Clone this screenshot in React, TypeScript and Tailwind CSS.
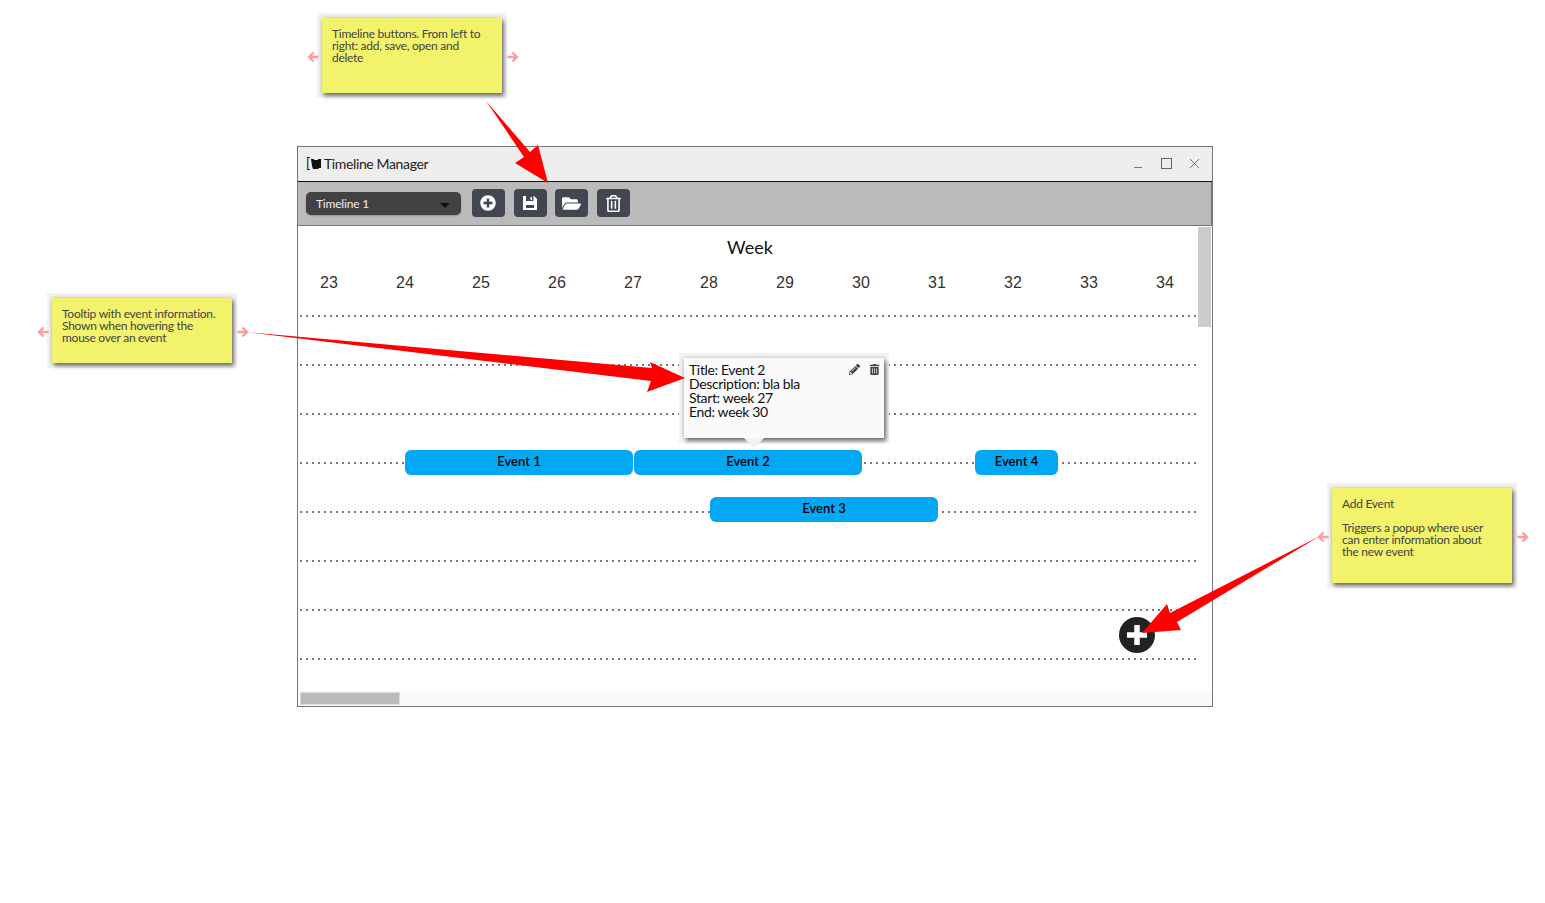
import { FaPlusCircle, FaFolderOpen, FaRegTrashAlt, FaPencilAlt, FaTrashAlt } from "react-icons/fa";

const weeks = [23, 24, 25, 26, 27, 28, 29, 30, 31, 32, 33, 34];
const sans = "font-['Lato','Noto_Sans',sans-serif]";

function PinkArrows({ top }: { top: string }) {
  return (
    <>
      <svg className={`absolute left-[-15px] w-[12px] h-[12px] ${top}`} viewBox="0 0 12 12" fill="none" stroke="#ff9c9c" strokeWidth="2.4">
        <path d="M6.5 1.5 2 6l4.5 4.5M2 6h9.5" />
      </svg>
      <svg className={`absolute right-[-17px] w-[12px] h-[12px] ${top}`} viewBox="0 0 12 12" fill="none" stroke="#ff9c9c" strokeWidth="2.4">
        <path d="M5.5 1.5 10 6l-4.5 4.5M10 6H.5" />
      </svg>
    </>
  );
}

function Note({ className, children }: { className: string; children: React.ReactNode }) {
  return (
    <div className={`absolute w-[180px] bg-[#f2f26b] text-[#444] text-[12px] leading-[12px] tracking-[-0.27px] pl-[10px] pr-[10px] pt-[10px] shadow-[2px_3px_4px_rgba(0,0,0,0.5),0_0_4px_rgba(0,0,0,0.2),0_0_0_5px_#f2f2f2] ${className}`}>
      {children}
    </div>
  );
}

function ToolButton({ children }: { children: React.ReactNode }) {
  return (
    <button className="w-[33px] h-[28px] rounded-[4px] bg-[#424650] text-white flex items-center justify-center text-[17px]">
      {children}
    </button>
  );
}

function EventBar({ label, className }: { label: string; className: string }) {
  return (
    <div className={`absolute h-[25px] pb-[1px] rounded-[6px] bg-[#02a8f3] text-black text-[13px] font-semibold flex items-center justify-center ${className}`}>
      {label}
    </div>
  );
}

function Row({ children }: { children?: React.ReactNode }) {
  return (
    <div className="relative shrink-0 h-[49px] w-[898px] bg-[linear-gradient(to_right,#777_2px,transparent_2px)] bg-[length:6px_2px] bg-repeat-x bg-top">
      <div className="absolute left-[914px] top-0 w-[1px] h-[2px] bg-[#333]" />
      {children}
    </div>
  );
}

export default function App() {
  return (
    <div className={`relative w-[1545px] h-[903px] overflow-hidden bg-white pt-[146px] pl-[297px] ${sans}`}>
      <div className="relative w-[916px] h-[561px] border border-[#777] flex flex-col bg-white">
        <div className="shrink-0 h-[35px] bg-[#eeeeee] flex items-center pl-[8px] pr-[13px] pb-[2px] border-b border-[#111]">
          <span className="text-[13px] text-black leading-none">[</span>
          <svg className="w-[10px] h-[11px] mr-[3px] ml-[1px]" viewBox="0 0 10 11" fill="#111">
            <path d="M0 1h2.5l1 1h3l1-1H10v9H8l-1 1H2L1 8z" />
          </svg>
          <span className="text-[14px] text-[#222] tracking-[-0.37px]">Timeline Manager</span>
          <div className="ml-auto flex items-center gap-[18px] text-[#666]">
            <svg className="w-[10px] h-[10px]" viewBox="0 0 10 10" stroke="#777" strokeWidth="1"><path d="M1 9.5h8" /></svg>
            <svg className="w-[11px] h-[11px]" viewBox="0 0 11 11" fill="none" stroke="#666" strokeWidth="1"><rect x=".5" y=".5" width="10" height="10" /></svg>
            <svg className="w-[9px] h-[9px]" viewBox="0 0 9 9" fill="none" stroke="#777" strokeWidth="1"><path d="M0 0l9 9M9 0 0 9" /></svg>
          </div>
        </div>
        <div className="shrink-0 h-[44px] bg-[#bbbbbb] border-b border-[#777] border-r border-r-[#777] flex items-center pl-[8px] pb-[1px] gap-[8.67px]">
          <div className="w-[155px] h-[23px] mt-[1px] mr-[2.33px] rounded-[5px] bg-[#424242] shadow-[0_1px_2px_rgba(0,0,0,0.2)] text-[#eee] text-[12px] tracking-[-0.2px] flex items-center pl-[10px] pr-[11px] justify-between">
            <span>Timeline 1</span>
            <span className="w-0 h-0 border-x-[5px] border-x-transparent border-t-[5px] border-t-[#111] mt-[3px]" />
          </div>
          <ToolButton><FaPlusCircle className="text-[16px]" /></ToolButton>
          <ToolButton>
            <svg className="w-[16px] h-[16px]" viewBox="0 0 16 16">
              <path fill="#fff" d="M1 1h11l3 3v11H1z" />
              <rect fill="#424650" x="4" y="1" width="7.5" height="5" />
              <rect fill="#fff" x="8.5" y="2" width="1.6" height="3" />
              <rect fill="#424650" x="4" y="10" width="8" height="3" />
            </svg>
          </ToolButton>
          <ToolButton><FaFolderOpen className="text-[19px]" /></ToolButton>
          <ToolButton><FaRegTrashAlt /></ToolButton>
        </div>
        <div className="relative flex-1 min-h-0 overflow-hidden flex flex-col">
          <div className="shrink-0 h-[89px] w-[904px] flex flex-col">
            <div className="h-[41px] pt-[9px] text-center text-[18px] leading-[24px] text-[#111]">Week</div>
            <div className="grid grid-cols-12 w-[912px] ml-[-7px] text-[16px] text-[#333] font-['Liberation_Sans',sans-serif] leading-[20px] pt-[6px]">
              {weeks.map((w) => (
                <div key={w} className="text-center">{w}</div>
              ))}
            </div>
          </div>
          <Row />
          <Row />
          <Row />
          <Row>
            <EventBar label="Event 1" className="left-[107px] top-[-12px] w-[228px]" />
            <EventBar label="Event 2" className="left-[336px] top-[-12px] w-[228px]" />
            <EventBar label="Event 4" className="left-[677px] top-[-12px] w-[83px]" />
          </Row>
          <Row>
            <EventBar label="Event 3" className="left-[412px] top-[-14px] w-[228px]" />
          </Row>
          <Row />
          <Row />
          <Row />
          <div className="absolute left-[386px] top-[132px] w-[200px] h-[80px] bg-[#fafafa] shadow-[2px_3px_4px_rgba(0,0,0,0.5),0_0_4px_rgba(0,0,0,0.2),0_0_0_5px_#f2f2f2] pl-[5px] pt-[5px] text-[14px] leading-[14px] tracking-[-0.35px] text-[#111]">
            <div>Title: Event 2</div>
            <div>Description: bla bla</div>
            <div>Start: week 27</div>
            <div>End: week 30</div>
            <FaPencilAlt className="absolute left-[165px] top-[6px] text-[11px] text-[#444]" />
            <FaTrashAlt className="absolute left-[185px] top-[6px] text-[11px] text-[#444]" />
            <div className="absolute left-[60px] top-[80px] w-0 h-0 border-x-[10px] border-x-transparent border-t-[10px] border-t-[#f2f2f2]" />
          </div>
          <div className="absolute left-[821px] top-[391px] w-[36px] h-[36px] rounded-full bg-[#222] flex items-center justify-center">
            <svg className="w-[20px] h-[20px]" viewBox="0 0 20 20" stroke="#fff" strokeWidth="5.5"><path d="M10 0v20M0 10h20" /></svg>
          </div>
          <div className="absolute right-[1px] top-[1px] w-[13px] h-[100px] bg-[#cccccc]" />
          <div className="absolute left-0 right-0 bottom-0 h-[15px] bg-[#fafafa] pl-[2px] pt-[1px]">
            <div className="w-[100px] h-[13px] bg-[#bbbbbb] border border-[#ddd]" />
          </div>
        </div>
      </div>

      <Note className="left-[322px] top-[18px] h-[75px]">
        Timeline buttons. From left to right: add, save, open and delete
        <PinkArrows top="top-[33px]" />
      </Note>
      <Note className="left-[52px] top-[298px] h-[65px]">
        Tooltip with event information. Shown when hovering the mouse over an event
        <PinkArrows top="top-[28px]" />
      </Note>
      <Note className="left-[1332px] top-[488px] h-[95px]">
        <div className="mb-[12px]">Add Event</div>
        <div className="pr-[10px]">Triggers a popup where user can enter information about the new event</div>
        <PinkArrows top="top-[43px]" />
      </Note>

      <svg className="absolute inset-0 w-[1545px] h-[903px] pointer-events-none" viewBox="0 0 1545 903" fill="#ff0000">
        <polygon points="486,101 530,152 538,145 548,183 515,163 524,157" />
        <polygon points="245,332 652,368 650,362 685,378 647,392 651,381" />
        <polygon points="1320,536 1170,613 1167,604 1142,633 1181,630 1177,622" />
      </svg>
    </div>
  );
}
